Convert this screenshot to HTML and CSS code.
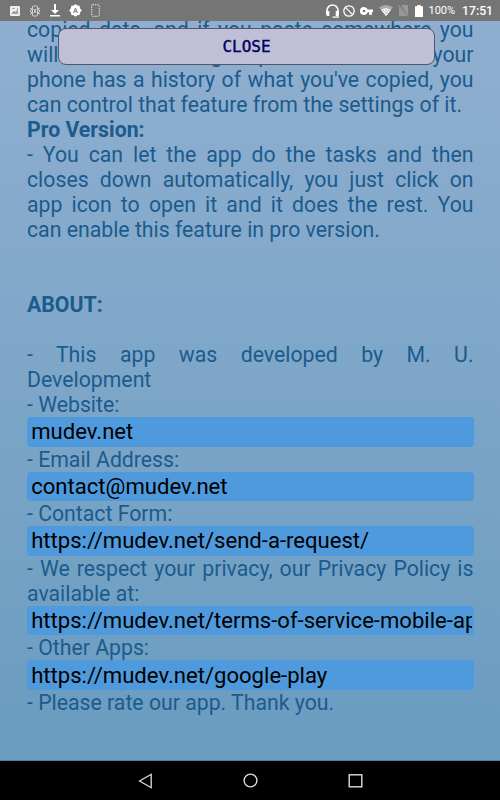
FILE: index.html
```html
<!DOCTYPE html>
<html lang="en">
<head>
    <meta charset="UTF-8">
    <title>About</title>
    <link rel="stylesheet" href="styles.css">
</head>
<body>
<div class="status-bar">
    <div class="status-left">
        <svg width="10" height="10" viewBox="0 0 10 10"><rect width="10" height="10" rx="1" fill="#eee"/><path d="M2 7.5L4 5l1.5 1.5L7 4.5l1 3zM2 2.5h3M7.5 2v3" fill="#999" stroke="#999" stroke-width=".8"/></svg>
        <svg width="12" height="12" viewBox="0 0 12 12" fill="none" stroke="#ddd" stroke-width=".9"><rect x="3.5" y="1" width="5" height="10" rx="1"/><path d="M1 3l2 1-2 2 2 2-2 1M11 3L9 4l2 2-2 2 2 1M5 4l2 4M7 4L5 8"/></svg>
        <svg width="10" height="13" viewBox="0 0 10 13" fill="#fff"><path d="M4 0h2v6h3L5 10 1 6h3zM0 11h10v1.5H0z"/></svg>
        <svg width="13" height="13" viewBox="0 0 13 13"><path d="M6.5 0l1.8 1.5 2.3.2.3 2.3L12.8 6.5 11 8.6l-.3 2.4-2.4.2-1.8 1.6-1.8-1.6-2.4-.2L2 8.6.2 6.5 2 4l.3-2.3 2.4-.2z" fill="#fff"/><path d="M4.6 9l1.9-5 1.9 5M5.2 7.4h2.6" fill="none" stroke="#777" stroke-width="1"/></svg>
        <svg width="9" height="13" viewBox="0 0 9 13"><rect x=".7" y=".7" width="7.6" height="11.6" rx="1" fill="none" stroke="#eee" stroke-width="1" stroke-dasharray="1.3 1"/></svg>
    </div>
    <div class="status-right">
        <svg width="15" height="14" viewBox="0 0 15 14"><path d="M2 8V6.5a5.4 5.4 0 0 1 11 0V8" fill="none" stroke="#fff" stroke-width="1.6"/><path d="M1 7h3.3v5H3a2 2 0 0 1-2-2zM10.7 7H14v3a2 2 0 0 1-2 2h-1.3z" fill="#fff"/><path d="M13 11v2.2H7.5" fill="none" stroke="#fff" stroke-width="1.3"/></svg>
        <svg class="icon-block" width="12" height="12" viewBox="0 0 12 12" fill="none" stroke="#fff" stroke-width="1.3"><circle cx="6" cy="6" r="5.2"/><path d="M2.4 2.4l7.2 7.2"/></svg>
        <svg width="13" height="8" viewBox="0 0 13 8"><path d="M4 0a4 4 0 0 1 3.7 2.6H13v2.7h-1.2V8H9.2V5.3H7.7A4 4 0 1 1 4 0zm0 2.7a1.3 1.3 0 1 0 0 2.6 1.3 1.3 0 0 0 0-2.6z" fill="#fff"/></svg>
        <svg class="icon-wifi" width="14" height="11" viewBox="0 0 14 11"><path d="M0 2.6a11 11 0 0 1 14 0L7 11z" fill="#aaa"/><path d="M2.2 5a8 8 0 0 1 9.6 0L7 11z" fill="#fff"/><path d="M4 5.2l1.4 1M7 4.5v2M10 5.2l-1.4 1M5.8 8h2.4" stroke="#888" stroke-width=".8"/></svg>
        <svg width="11" height="11" viewBox="0 0 11 11"><path d="M3 0h7v10zM1 2.3L9 11H1z" fill="#999"/><path d="M.3.5l10 10.3" stroke="#aaa" stroke-width=".9"/></svg>
        <svg class="icon-battery" width="8" height="12" viewBox="0 0 8 12"><path d="M2.3 0h3.4v1.2H8V12H0V1.2h2.3z" fill="#fff"/></svg>
        <span class="percent">100%</span>
        <span class="clock">17:51</span>
    </div>
</div>

<div class="content">
    <p>copied data, and if you paste somewhere you will have something in place even when your phone has a history of what you've copied, you can control that feature from the settings of it.</p>
    <p><b>Pro Version:</b></p>
    <p>- You can let the app do the tasks and then closes down automatically, you just click on app icon to open it and it does the rest. You can enable this feature in pro version.</p>
    <br><br>
    <p><b>ABOUT:</b></p>
    <br>
    <p>- This app was developed by M. U. Development</p>
    <p>- Website:</p>
    <div class="link-box"><div class="link-text">mudev.net</div></div>
    <p>- Email Address:</p>
    <div class="link-box"><div class="link-text">contact@mudev.net</div></div>
    <p>- Contact Form:</p>
    <div class="link-box"><div class="link-text">https://mudev.net/send-a-request/</div></div>
    <p>- We respect your privacy, our Privacy Policy is available at:</p>
    <div class="link-box"><div class="link-text">https://mudev.net/terms-of-service-mobile-apps/</div></div>
    <p>- Other Apps:</p>
    <div class="link-box"><div class="link-text">https://mudev.net/google-play</div></div>
    <p>- Please rate our app. Thank you.</p>
    <button class="close-btn">CLOSE</button>
</div>

<div class="nav-bar">
    <svg width="15" height="16" viewBox="0 0 15 16"><path d="M13.2 1.3v13.4L1.6 8z" fill="none" stroke="#ddd" stroke-width="1.3"/></svg>
    <svg width="15" height="15" viewBox="0 0 15 15"><circle cx="7.5" cy="7.5" r="6.4" fill="none" stroke="#ddd" stroke-width="1.4"/></svg>
    <svg width="15" height="14" viewBox="0 0 15 14"><rect x="1.2" y=".8" width="12.6" height="12" fill="none" stroke="#ddd" stroke-width="1.4"/></svg>
</div>
</body>
</html>
```

FILE: styles.css
```css
body {
    margin: 0;
    height: 800px;
    display: flex;
    flex-direction: column;
    overflow: hidden;
    font-family: Roboto, sans-serif;
}
.status-bar {
    height: 21px;
    flex: none;
    display: flex;
    justify-content: space-between;
    align-items: center;
    background: #757575;
    color: #fff;
}
.status-left, .status-right {
    display: flex;
    align-items: center;
}
.status-left {
    padding-left: 10px;
    gap: 9px;
}
.status-right {
    padding-right: 7px;
    gap: 5px;
}
.icon-block {
    margin-left: -2px;
}
.icon-wifi, .icon-battery {
    margin-left: 1px;
}
.percent {
    font-size: 11px;
}
.clock {
    font-size: 12.2px;
    font-weight: 500;
    margin-left: 2px;
}
.content {
    position: relative;
    flex: 1;
    overflow: hidden;
    box-sizing: border-box;
    padding: 0 26.5px 0 27px;
    background: linear-gradient(#90afd0, #699cc0);
    border-bottom: 1px solid #4f7fa5;
    color: #1b5b8d;
    font-size: 21.25px;
    line-height: 25px;
    text-align: justify;
}
.content p {
    margin: 0;
}
.content p:first-child {
    margin-top: -4.1px;
}
.link-box {
    box-sizing: border-box;
    height: 29.6px;
    padding: 2.4px 2px 2px 4.2px;
    background: #4e9adc;
    border-radius: 4px;
    color: #000;
    font-size: 22.1px;
}
.link-text {
    overflow: hidden;
    white-space: nowrap;
}
.close-btn {
    position: absolute;
    top: 7px;
    left: 58px;
    width: 377px;
    height: 37px;
    border: 1px solid #55566a;
    border-radius: 8px;
    background: #bfc0d8;
    color: #00005c;
    font-family: "DejaVu Sans Mono", monospace;
    font-size: 16px;
    -webkit-text-stroke: 0.4px #00005c;
}
.nav-bar {
    height: 39px;
    flex: none;
    display: flex;
    justify-content: center;
    align-items: center;
    gap: 90px;
    background: #000;
}
```
